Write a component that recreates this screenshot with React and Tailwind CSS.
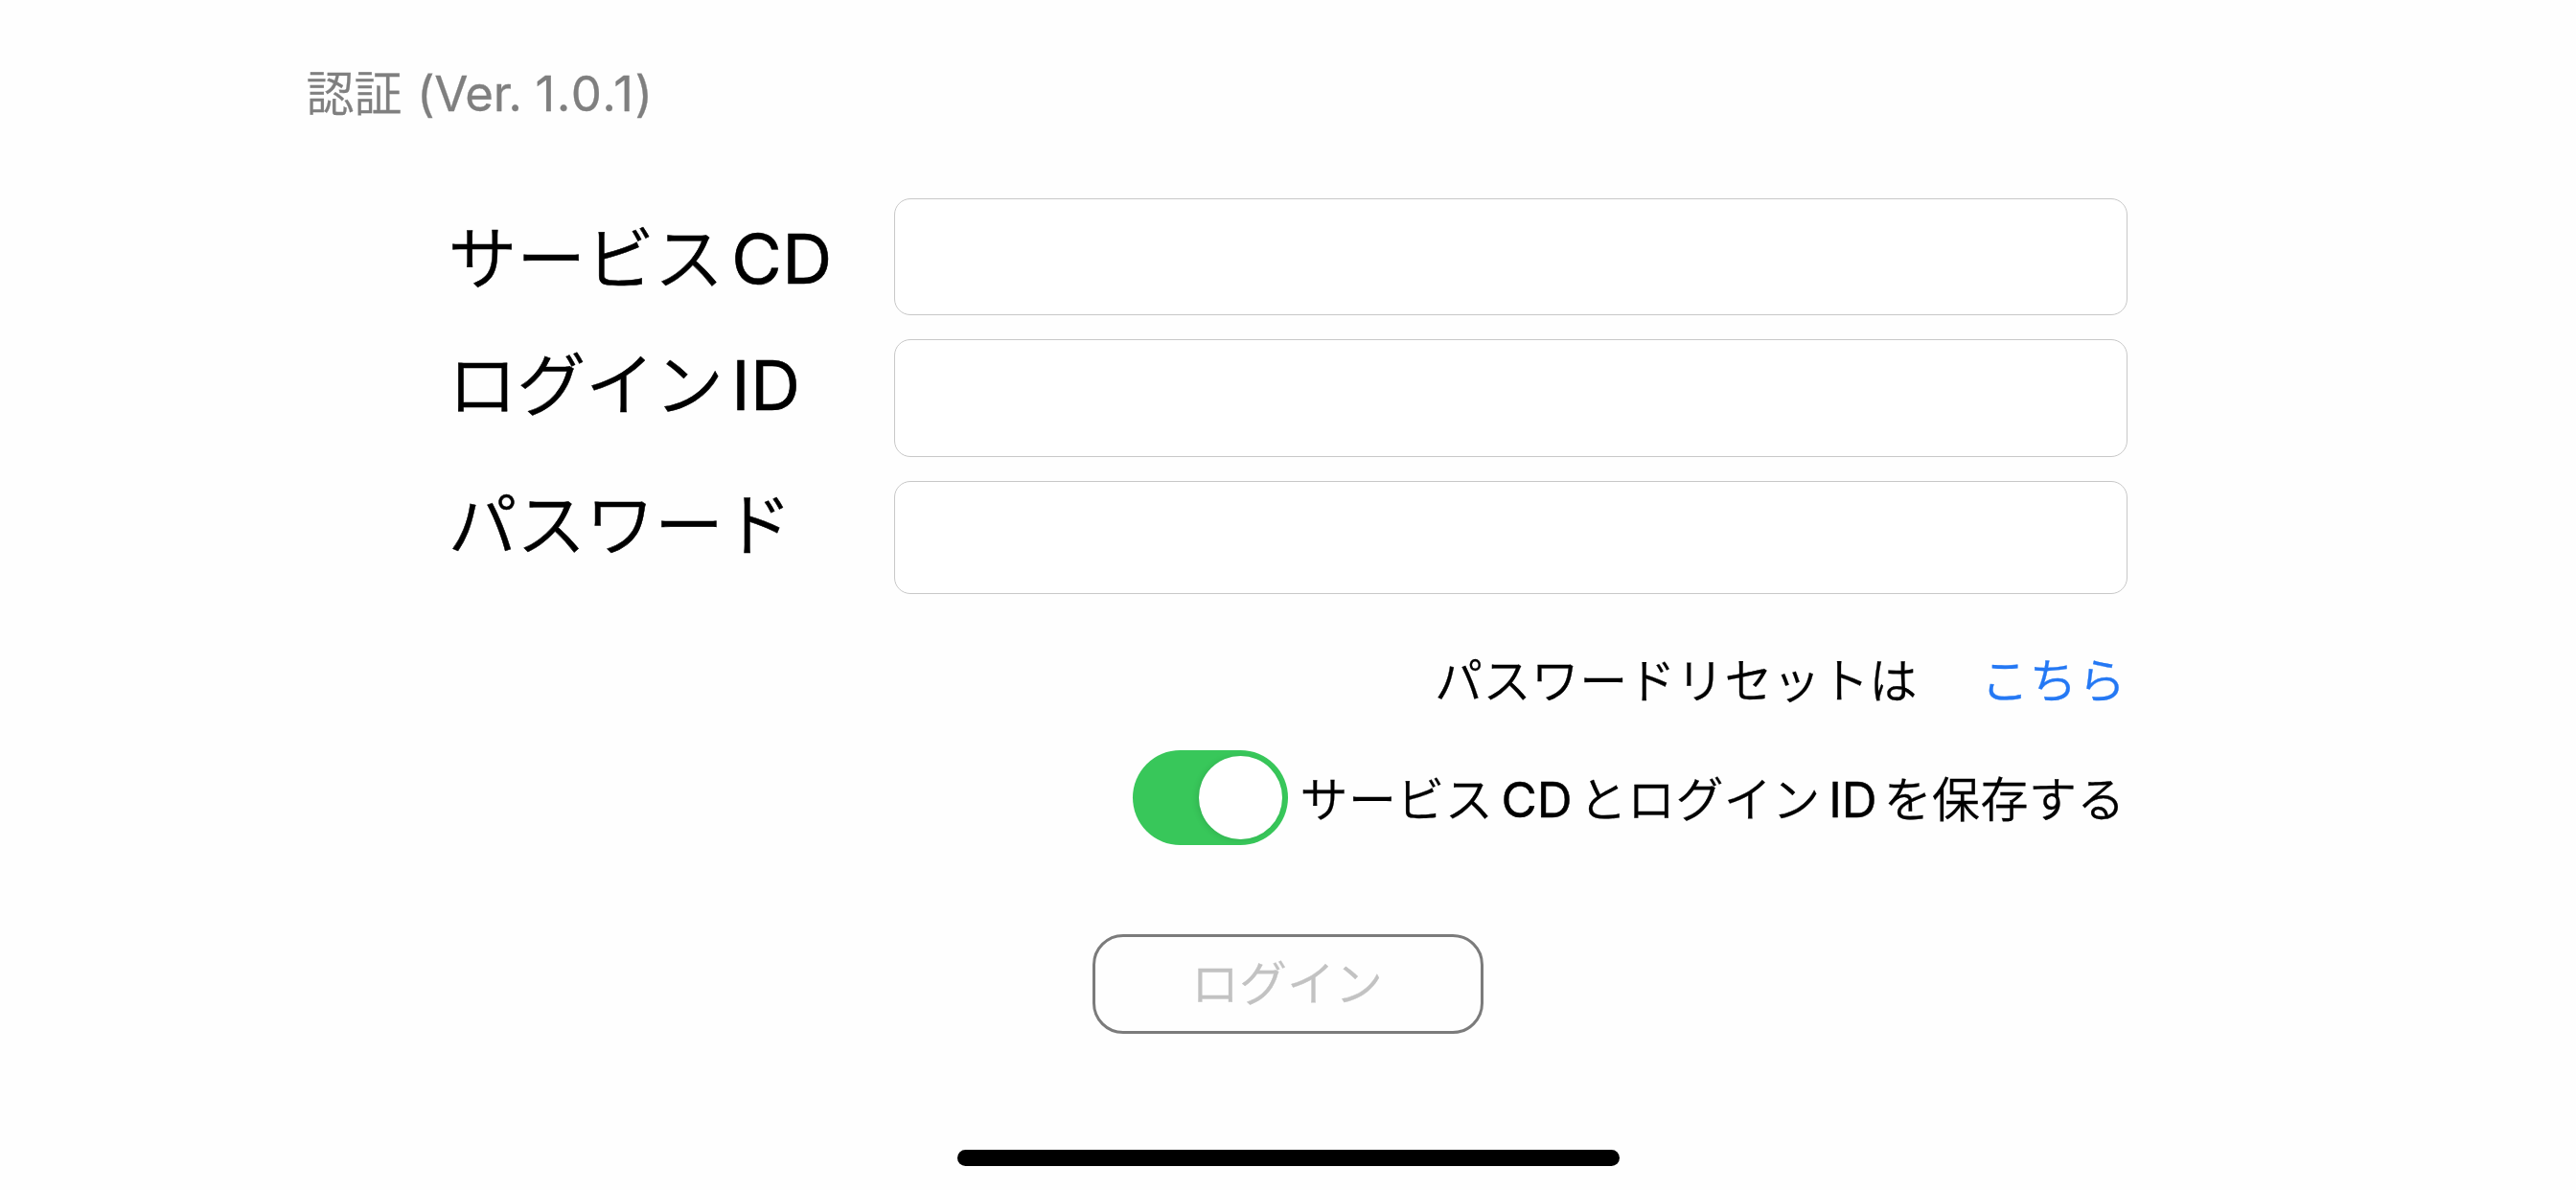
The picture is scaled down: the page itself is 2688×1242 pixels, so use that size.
import { useState } from "react";

function Field({ label, latin, type = "text", labelClass, rowClass }) {
  return (
    <div className={`flex items-start pl-[467.5px] ${rowClass}`}>
      <label className={`w-[465.5px] shrink-0 text-[72px] leading-[88px] tracking-[-0.2px] text-black [-webkit-text-stroke:0.5px_black] ${labelClass}`}>
        {label}
        {latin && <span className="ml-[8.5px] font-normal tracking-[0.4px] [-webkit-text-stroke:0.6px_black]">{latin}</span>}
      </label>
      <input
        type={type}
        className="h-full w-[1287px] rounded-[17px] border border-[#c8c8c8] bg-white px-6 text-[51px] outline-none"
      />
    </div>
  );
}

function Toggle({ on, onClick }) {
  return (
    <button
      type="button"
      role="switch"
      aria-checked={on}
      onClick={onClick}
      className={`flex h-[99px] w-[162.5px] shrink-0 items-center rounded-full px-[6px] ${on ? "justify-end bg-[#38c75a]" : "justify-start bg-[#e9e9eb]"}`}
    >
      <span className="size-[87px] rounded-full bg-white shadow-[-2px_1px_6px_rgba(0,0,0,0.1)]" />
    </button>
  );
}

export default function App() {
  const [save, setSave] = useState(true);
  return (
    <div
      lang="ja"
      className="flex h-[1242px] w-[2688px] flex-col overflow-hidden bg-[#fefefe] font-['Inter','Noto_Sans_CJK_JP',sans-serif] text-[50px] leading-[60px] font-[350] whitespace-nowrap"
    >
      <h1 className="mt-[68px] h-[60px] pl-[319.5px] font-[350] text-[#7f7f7f] [-webkit-text-stroke:0.3px_#7f7f7f]">
        認証
        <span className="ml-[1.5px] text-[51px] font-normal tracking-[-0.4px] whitespace-pre"> (Ver. </span>
        <span className="text-[51px] font-normal tracking-[1.6px]">1.0.1)</span>
      </h1>

      <form className="flex flex-col pt-[79px]">
        <Field label="サービス" latin="CD" rowClass="h-[122px]" labelClass="pt-[19px]" />
        <Field label="ログイン" latin="ID" rowClass="mt-[25px] h-[123px]" labelClass="pt-[4px]" />
        <Field label="パスワード" type="password" rowClass="mt-[25px] h-[118px]" labelClass="pt-[2px]" />
      </form>

      <div className="mt-[61px] flex pl-[1497px] text-black">
        <span className="w-[570px] tracking-[0.4px] [-webkit-text-stroke:0.3px_black]">パスワードリセットは</span>
        <a className="tracking-[0.6px] text-[#2478f4] [-webkit-text-stroke:0.3px_#2478f4]">こちら</a>
      </div>

      <div className="mt-[42px] flex items-start gap-[12.5px] pl-[1181.5px]">
        <Toggle on={save} onClick={() => setSave(!save)} />
        <span className="pt-[22px] tracking-[0.4px] text-black [-webkit-text-stroke:0.3px_black]">
          サービス
          <span className="mr-[7px] ml-[8.5px] text-[51px] font-normal tracking-normal [-webkit-text-stroke:0.5px_black]">CD</span>
          とログイン
          <span className="mr-[7px] ml-[8.5px] text-[51px] font-normal tracking-normal [-webkit-text-stroke:0.5px_black]">ID</span>
          を保存する
        </span>
      </div>

      <button
        type="button"
        className="mt-[93px] ml-[1140px] flex h-[104px] w-[408px] items-start justify-center rounded-[32px] border-[3px] border-[#7b7b7b] pt-[19px] pr-[2px] text-[#c2c2c2] [-webkit-text-stroke:0.3px_#c2c2c2]"
      >
        ログイン
      </button>

      <div className="mt-[121px] ml-[999px] h-[17px] w-[691px] rounded-full bg-black" />
    </div>
  );
}
